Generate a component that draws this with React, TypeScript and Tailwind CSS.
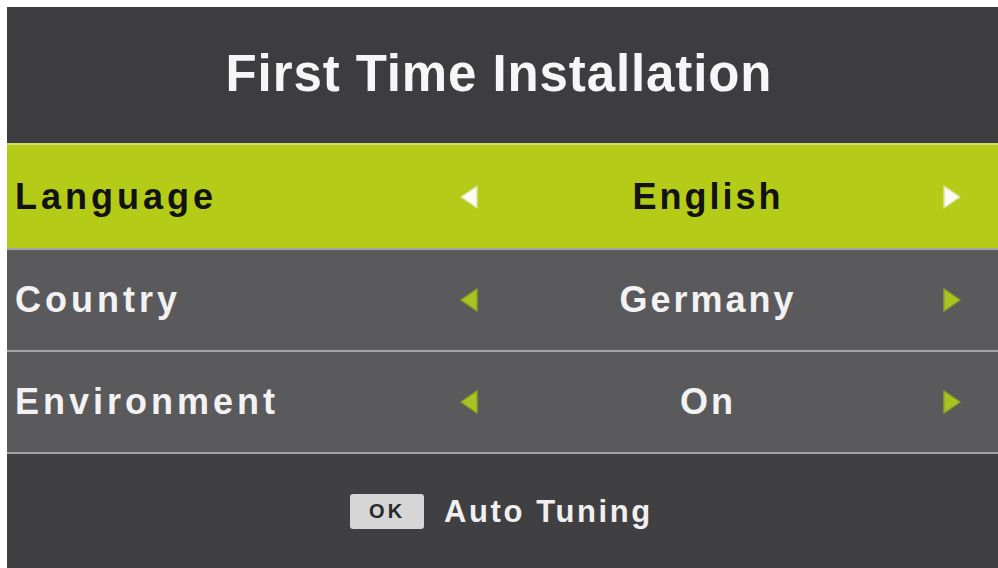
import React from "react";

interface SettingRow {
  label: string;
  value: string;
  active?: boolean;
  height: string;
}

const rows: SettingRow[] = [
  { label: "Language", value: "English", active: true, height: "h-[105px]" },
  { label: "Country", value: "Germany", height: "h-[102px]" },
  { label: "Environment", value: "On", height: "h-[102px]" },
];

const Arrow: React.FC<{ dir: "left" | "right"; active?: boolean }> = ({ dir, active }) => (
  <svg width="22" height="28" viewBox="0 0 22 28" className="block">
    <polygon
      points={dir === "left" ? "18,3 18,25 2,14" : "4,3 4,25 20,14"}
      fill={active ? "#fbfbf4" : "#a9c322"}
      stroke={active ? "#d8e39a" : "#8ea31f"}
      strokeWidth="1.5"
      strokeLinejoin="round"
    />
  </svg>
);

const App: React.FC = () => {
  return (
    <div className="w-[998px] h-[568px] bg-white pl-[7px] pt-[7px] font-['Liberation_Sans',Arial,sans-serif] font-bold">
      <div className="w-full h-full bg-[#3d3d3f] flex flex-col">
        {/* Title */}
        <div className="h-[136px] flex items-center justify-center">
          <h1 className="text-[51px] leading-none text-[#f6f6f6] tracking-[0.9px] -mt-[3px] ml-[-7px]">
            First Time Installation
          </h1>
        </div>

        {/* Settings */}
        {rows.map((row) => (
          <div
            key={row.label}
            className={`${row.height} flex items-center border-t-2 ${
              row.active
                ? "bg-[#b4cb18] border-[#cfdb6e] text-[#121212]"
                : "bg-[#5a5a5c] border-[#a6a6a6] text-[#f2f2f2]"
            }`}
          >
            <div className="w-[446px] pl-[8px] text-[36px] tracking-[4px] leading-none">
              {row.label}
            </div>
            <div className="w-[34px] flex justify-center">
              <Arrow dir="left" active={row.active} />
            </div>
            <div className="w-[442px] text-center text-[36px] tracking-[3px] leading-none">
              {row.value}
            </div>
            <div className="w-[34px] flex justify-center ml-[5px]">
              <Arrow dir="right" active={row.active} />
            </div>
          </div>
        ))}

        {/* Footer */}
        <div className="flex-1 border-t-2 border-[#a6a6a6] bg-[#404042] flex items-center justify-center gap-[20px] pr-[2px]">
          <span className="w-[74px] h-[35px] rounded-[3px] bg-[#d6d6d6] flex items-center justify-center text-[20px] tracking-[3px] text-[#2a2a2a] leading-none">
            OK
          </span>
          <span className="text-[31px] tracking-[2.6px] text-[#f0f0f0] leading-none">
            Auto Tuning
          </span>
        </div>
      </div>
    </div>
  );
};

export default App;
